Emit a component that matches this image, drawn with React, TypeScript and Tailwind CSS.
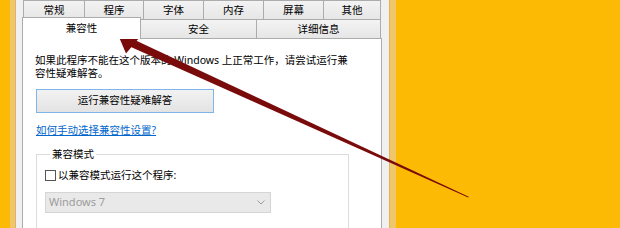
const font = { fontFamily: '"Noto Sans", "Noto Sans CJK SC", sans-serif' };

type Tab = { label: string; width: string };

const topTabs: Tab[] = [
  { label: '常规', width: 'w-[61px]' },
  { label: '程序', width: 'w-[59px]' },
  { label: '字体', width: 'w-[60px]' },
  { label: '内存', width: 'w-[60px]' },
  { label: '屏幕', width: 'w-[60px]' },
  { label: '其他', width: 'w-[58px]' },
];

function TabButton({ label, width, last }: Tab & { last?: boolean }) {
  return (
    <div
      className={`${width} h-full flex items-center justify-center border-t border-l ${
        last ? 'border-r' : ''
      } border-[#acacac] bg-gradient-to-b from-[#f3f3f3] to-[#e6e6e6] text-[10.5px] leading-none text-black`}
    >
      {label}
    </div>
  );
}

function Arrow() {
  return (
    <svg
      className="absolute inset-0 pointer-events-none"
      width={620}
      height={228}
      viewBox="0 0 620 228"
    >
      <polygon points="119,37 139.5,37.5 126,53.5" fill="#7a0b0b" />
      <polygon
        points="133.2,39.2 129.8,46.4 468.2,197.6 468.7,196.7"
        fill="#7a0b0b"
      />
    </svg>
  );
}

export default function App() {
  return (
    <div
      className="relative w-[620px] h-[228px] overflow-hidden flex bg-[#fcba05]"
      style={font}
    >
      {/* left edge of window */}
      <div className="w-[10px] shrink-0" />
      <div className="w-[5px] shrink-0 bg-[#f0c66a]" />
      <div className="w-px shrink-0 bg-[#dcb560]" />

      {/* window frame */}
      <div className="w-[373px] shrink-0 bg-[#f0f0f0] pl-[6px] pr-[7px]">
        <div className="w-[360px]">
          <div className="flex h-[19px] pl-px">
            {topTabs.map((t, i) => (
              <TabButton key={t.label} {...t} last={i === topTabs.length - 1} />
            ))}
          </div>
          <div className="flex items-start h-[19px]">
            <div className="relative z-10 -mt-[2px] w-[119px] h-[22px] flex items-center justify-center border-t border-l border-r border-[#acacac] bg-white text-[10.5px] leading-none text-black">
              兼容性
            </div>
            <div className="w-[115px] h-full flex items-center justify-center border-t border-[#acacac] bg-gradient-to-b from-[#f3f3f3] to-[#e6e6e6] text-[10.5px] leading-none text-black pt-px">
              安全
            </div>
            <div className="w-[125px] h-full flex items-center justify-center border-t border-l border-r border-[#acacac] bg-gradient-to-b from-[#f3f3f3] to-[#e6e6e6] text-[10.5px] leading-none text-black pt-px">
              详细信息
            </div>
          </div>

          {/* page */}
          <div className="h-[200px] border border-b-0 border-[#acacac] bg-white pl-[12px] overflow-hidden">
            <p className="mt-[15px] text-[10.5px] leading-[13px] text-black">
              如果此程序不能在这个版本的 Windows 上正常工作，请尝试运行兼
              <br />
              容性疑难解答。
            </p>
            <button className="mt-[9px] ml-px w-[178px] h-[24px] flex items-center justify-center border border-[#7eb4ea] bg-gradient-to-b from-[#f2f2f2] to-[#e3e3e3] text-[10.5px] text-black">
              运行兼容性疑难解答
            </button>
            <div className="mt-[10px] ml-px h-[14px] leading-[14px] text-[10.5px] text-[#0066cc] underline">
              如何手动选择兼容性设置?
            </div>
            <fieldset className="mt-[11px] ml-px w-[313px] border border-[#dcdcdc] pl-[8px] pb-[40px]">
              <legend className="ml-[5px] px-[2px] text-[10.5px] leading-[13px] text-black">
                兼容模式
              </legend>
              <div className="mt-[8px] flex items-center h-[13px] gap-[2px]">
                <span className="w-[11px] h-[11px] border border-[#555] bg-white shrink-0" />
                <span className="text-[10.5px] leading-none text-black">以兼容模式运行这个程序:</span>
              </div>
              <div className="mt-[10px] w-[226px] h-[21px] flex items-center justify-between border border-[#d5d5d5] bg-[#e9e9e9] pl-[3px] pr-[5px]">
                <span className="text-[11px] text-[#9c9c9c]">Windows 7</span>
                <svg width="8" height="5" viewBox="0 0 8 5">
                  <path d="M0.5 0.5 L4 4 L7.5 0.5" fill="none" stroke="#9c9c9c" strokeWidth="1" />
                </svg>
              </div>
            </fieldset>
          </div>
        </div>
      </div>

      {/* right edge of window */}
      <div className="w-px shrink-0 bg-[#dcb560]" />
      <div className="w-[6px] shrink-0 bg-[#f0c66a]" />
      <div className="flex-1" />

      <Arrow />
    </div>
  );
}
